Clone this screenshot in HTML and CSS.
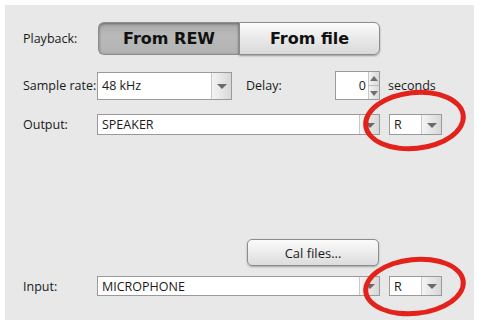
FILE: index.html
```html
<!DOCTYPE html>
<html lang="en">
<head>
    <meta charset="UTF-8">
    <title>Measurement settings</title>
    <link rel="stylesheet" href="styles.css">
</head>
<body>
    <div class="panel">
        <div class="row row-playback">
            <span class="label">Playback:</span>
            <div class="toggle">
                <button class="seg seg-on">From REW</button>
                <button class="seg">From file</button>
            </div>
        </div>

        <div class="row row-rate">
            <span class="label">Sample rate:</span>
            <div class="combo combo-rate">
                <span class="combo-text">48 kHz</span>
                <span class="combo-arrow"></span>
            </div>
            <span class="label label-delay">Delay:</span>
            <div class="spinner">
                <span class="spin-value">0</span>
                <span class="spin-buttons">
                    <span class="spin-up"></span>
                    <span class="spin-down"></span>
                </span>
            </div>
            <span class="unit">seconds</span>
        </div>

        <div class="row row-device">
            <span class="label">Output:</span>
            <div class="combo combo-device">
                <span class="combo-text">SPEAKER</span>
                <span class="combo-arrow"></span>
            </div>
            <div class="combo combo-channel">
                <span class="combo-text">R</span>
                <span class="combo-arrow"></span>
            </div>
            <span class="circle"></span>
        </div>

        <div class="row row-cal">
            <button class="cal-btn">Cal files...</button>
        </div>

        <div class="row row-device row-input">
            <span class="label">Input:</span>
            <div class="combo combo-device">
                <span class="combo-text">MICROPHONE</span>
                <span class="combo-arrow"></span>
            </div>
            <div class="combo combo-channel">
                <span class="combo-text">R</span>
                <span class="combo-arrow"></span>
            </div>
            <span class="circle"></span>
        </div>
    </div>
</body>
</html>
```

FILE: styles.css
```css
body {
    margin: 0;
    background: #ffffff;
    font-family: 'Open Sans', 'DejaVu Sans', sans-serif;
    font-size: 12.5px;
    color: #1a1a1a;
}

.panel {
    margin: 5px;
    width: 469px;
    height: 315px;
    box-sizing: border-box;
    padding: 17px 0 0 18px;
    background: #e8e8e8;
}

.row {
    display: flex;
    align-items: center;
    position: relative;
    white-space: nowrap;
}

.label {
    width: 74px;
    flex-shrink: 0;
}

/* playback toggle */
.row-playback {
    height: 33px;
}

.toggle {
    display: flex;
    margin-left: 1px;
}

.seg {
    width: 141px;
    height: 33px;
    border: 1px solid #8c8c8c;
    background: linear-gradient(#fbfbfb, #e9e9e9 50%, #d9d9d9);
    font-family: 'DejaVu Sans', sans-serif;
    font-size: 16px;
    font-weight: bold;
    color: #111;
    border-radius: 0 6px 6px 0;
    box-shadow: 0 1px 2px rgba(0, 0, 0, 0.35);
    padding: 0;
}

.seg-on {
    background: linear-gradient(#a9a9a9, #b9b9b9 40%, #b3b3b3);
    border-radius: 6px 0 0 6px;
    border-right: none;
    box-shadow: inset 0 1px 3px rgba(0, 0, 0, 0.4);
}

/* combo boxes */
.combo {
    display: flex;
    background: #fff;
    border: 1px solid #9a9a9a;
    box-sizing: border-box;
}

.combo-text {
    flex: 1;
    padding-left: 4px;
    display: flex;
    align-items: center;
}

.combo-arrow {
    width: 19px;
    background: linear-gradient(90deg, #f4f4f4, #d8d8d8);
    border-left: 1px solid #c8c8c8;
    position: relative;
}

.combo-arrow::after {
    content: "";
    position: absolute;
    left: 5px;
    top: 50%;
    margin-top: -2px;
    border-left: 5px solid transparent;
    border-right: 5px solid transparent;
    border-top: 5px solid #6a6a6a;
}

.row-rate {
    margin-top: 16px;
    height: 29px;
}

.combo-rate {
    width: 135px;
    height: 28px;
}

.label-delay {
    width: 89px;
    margin-left: 14px;
}

.spinner {
    display: flex;
    width: 45px;
    height: 29px;
    border: 1px solid #9a9a9a;
    box-sizing: border-box;
    background: #fff;
}

.spin-value {
    flex: 1;
    text-align: right;
    padding-right: 2px;
    line-height: 27px;
}

.spin-buttons {
    width: 10px;
    display: flex;
    flex-direction: column;
    background: linear-gradient(90deg, #f2f2f2, #dadada);
    border-left: 1px solid #c8c8c8;
}

.spin-up, .spin-down {
    flex: 1;
    position: relative;
}

.spin-up {
    border-bottom: 1px solid #bbb;
}

.spin-up::after, .spin-down::after {
    content: "";
    position: absolute;
    left: 1px;
    border-left: 4px solid transparent;
    border-right: 4px solid transparent;
}

.spin-up::after {
    top: 4px;
    border-bottom: 5px solid #707070;
}

.spin-down::after {
    top: 5px;
    border-top: 5px solid #707070;
}

.unit {
    margin-left: 8px;
}

.row-device {
    margin-top: 14px;
    height: 21px;
}

.combo-device {
    width: 283px;
    height: 21px;
}

.combo-channel {
    width: 53px;
    height: 21px;
    margin-left: 9px;
}

/* red marker ellipses */
.circle {
    position: absolute;
    left: 340px;
    top: -24px;
    width: 93px;
    height: 51px;
    border: 5px solid #e3221b;
    border-radius: 50%;
    transform: rotate(-6deg);
}

.row-input .circle {
    top: -19px;
    height: 49px;
}

.row-cal {
    margin-top: 104px;
    height: 27px;
}

.cal-btn {
    margin-left: 224px;
    width: 132px;
    height: 27px;
    border: 1px solid #8c8c8c;
    border-radius: 5px;
    background: linear-gradient(#fbfbfb, #ececec 50%, #dcdcdc);
    box-shadow: 0 1px 2px rgba(0, 0, 0, 0.3);
    font-family: 'Open Sans', sans-serif;
    font-size: 13px;
    color: #1a1a1a;
}

.row-input {
    margin-top: 10px;
    height: 20px;
}

.row-input .combo {
    height: 20px;
}
```
